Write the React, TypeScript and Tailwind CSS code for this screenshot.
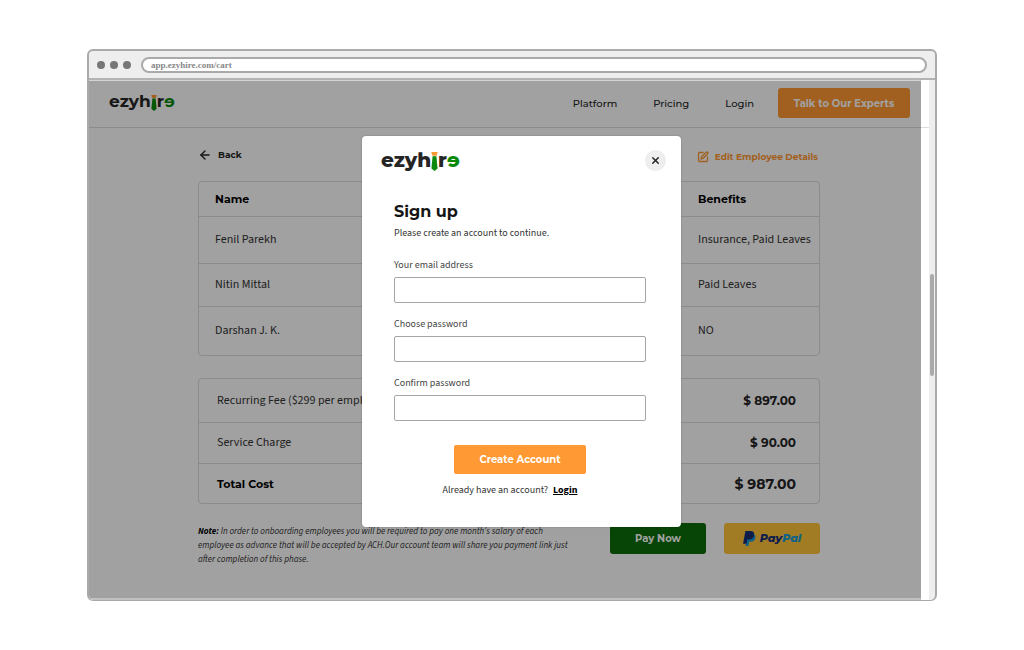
import React from "react";
import { ArrowLeft, SquarePen, X } from "lucide-react";

const heading = "font-[Montserrat,Inter,sans-serif]";
const body = "font-['Source_Sans_Pro','Source_Sans_3','Noto_Sans_CJK_SC',sans-serif]";

function Logo({ size }: { size: "sm" | "lg" }) {
  const text = size === "lg" ? "text-[20px] font-extrabold" : "text-[17px] font-bold";
  const tie = size === "lg" ? "h-[19px] w-[7px] mt-[3px]" : "h-[16px] w-[6px] mt-[3px]";
  return (
    <span className={`${heading} ${text} flex items-center leading-6 text-[#252525]`}>
      ezyh
      <svg viewBox="0 0 7 19" className={tie} aria-hidden="true">
        <path d="M0.200 0h6.600L5.500 3.800H1.500z" fill="#ff9933" />
        <path d="M1.600 4.200h3.800l1.200 12.200L3.500 19 0.400 16.400z" fill="#0a8a0a" />
      </svg>
      r<span className="-scale-x-100 text-[#0a8a0a]">e</span>
    </span>
  );
}

function PayPalMark() {
  return (
    <svg viewBox="0 0 24 28" className="h-[15px] w-[13px]" aria-hidden="true">
      <path d="M9 5h9.5c4 1 5.400 4 4.500 8-1 5-4.500 7-9 7h-2.500L10 28H4.500z" fill="#179bd7" />
      <path d="M4.300 0H14c5 0 7.400 3 6.500 7.500C19.500 13 16 15.500 11 15.500H8L6.500 24H0z" fill="#152f7c" />
      <path d="M9 6.500l10.800 3.200C18.500 13.600 15.500 15.500 11 15.500H7.600z" fill="#222d65" />
    </svg>
  );
}

const employees = [
  { name: "Fenil Parekh", benefits: "Insurance, Paid Leaves", height: "h-[47px]" },
  { name: "Nitin Mittal", benefits: "Paid Leaves", height: "h-[43px]" },
  { name: "Darshan J. K.", benefits: "NO", height: "h-[49px]" },
];

const fields = [
  { id: "email", label: "Your email address", type: "email" },
  { id: "password", label: "Choose password", type: "password" },
  { id: "confirm", label: "Confirm password", type: "password" },
];

const tableBox =
  "w-full border-separate border-spacing-0 rounded-[4px] border border-[#dcdcdc] text-left";
const line = "border-t border-[#dcdcdc]";

function SiteHeader() {
  return (
    <header className="flex h-[47px] items-center justify-between border-b border-[#dcdcdc] pr-[11px] pb-[2px] pl-5">
      <a href="#home" aria-label="ezyhire" className="-mt-1">
        <Logo size="sm" />
      </a>
      <nav className={`${heading} flex items-center text-[10px] font-medium text-[#252525]`}>
        <a href="#platform">Platform</a>
        <a href="#pricing" className="ml-9">Pricing</a>
        <a href="#login" className="ml-9">Login</a>
        <button
          type="button"
          className="ml-6 h-[30px] w-[132px] rounded-[3px] bg-[#ff9933] font-bold whitespace-nowrap text-white"
        >
          Talk to Our Experts
        </button>
      </nav>
    </header>
  );
}

function Cart() {
  return (
    <main className="pr-[101px] pl-[109px]">
      <div className={`${heading} flex h-[53px] items-center justify-between text-[9px] font-bold`}>
        <a href="#back" className="flex items-center gap-[6px] text-[#252525]">
          <ArrowLeft size={14} strokeWidth={2.4} />
          Back
        </a>
        <a href="#edit" className="flex items-center gap-[6px] pt-1 pr-[2px] text-[#ff9933]">
          <SquarePen size={12} strokeWidth={2.6} />
          Edit Employee Details
        </a>
      </div>

      <table className={tableBox}>
        <thead>
          <tr className={`${heading} h-[34px] text-[11px] leading-4 font-bold text-black`}>
            <th className="py-0 pr-0 pl-4">Name</th>
            <th className="w-[138px] py-0 pr-0 pl-[17px]">Benefits</th>
          </tr>
        </thead>
        <tbody className={`${body} text-[12px] leading-4 text-[#333]`}>
          {employees.map((e) => (
            <tr key={e.name} className={e.height}>
              <td className={`${line} py-0 pr-0 pl-4`}>{e.name}</td>
              <td className={`${line} py-0 pr-0 pl-[17px] whitespace-nowrap`}>{e.benefits}</td>
            </tr>
          ))}
        </tbody>
      </table>

      <table className={`${tableBox} mt-[22px]`}>
        <tbody className="leading-4">
          <tr className="h-[43px]">
            <td className={`${body} py-0 pl-[18px] text-[12px] text-[#333]`}>
              Recurring Fee ($299 per employee)
            </td>
            <td className={`${heading} py-0 pr-[23px] text-right text-[12px] font-bold text-[#252525]`}>$ 897.00</td>
          </tr>
          <tr className="h-[41px]">
            <td className={`${body} ${line} py-0 pl-[18px] text-[12px] text-[#333]`}>Service Charge</td>
            <td className={`${heading} ${line} py-0 pr-[23px] text-right text-[12px] font-bold text-[#252525]`}>$ 90.00</td>
          </tr>
          <tr className="h-[40px]">
            <td className={`${heading} ${line} py-0 pl-[18px] text-[11px] font-bold text-black`}>Total Cost</td>
            <td className={`${heading} ${line} py-0 pr-[23px] text-right text-[14px] font-bold text-[#252525]`}>$ 987.00</td>
          </tr>
        </tbody>
      </table>

      <div className="mt-[19px] flex items-start justify-between">
        <p className={`${body} w-[380px] pt-[2px] text-[9px] leading-[14px] text-[#333] italic`}>
          <strong className="text-black">Note:</strong> In order to onboarding employees you will be required to pay
          one month's salary of each employee as advance that will be accepted by ACH.Our account team will share you
          payment link just after completion of this phase.
        </p>
        <div className="flex gap-[18px]">
          <button
            type="button"
            className={`${heading} h-[31px] w-[96px] rounded-[3px] bg-[#0a6e0a] text-[10px] font-bold text-white`}
          >
            Pay Now
          </button>
          <button
            type="button"
            aria-label="PayPal"
            className="flex h-[31px] w-[96px] items-center justify-center gap-1 rounded-[3px] bg-[#ffc439] font-[Montserrat,Inter,sans-serif] text-[11px] font-extrabold italic"
          >
            <PayPalMark />
            <span className="text-[#152f7c]">
              Pay<span className="text-[#179bd7]">Pal</span>
            </span>
          </button>
        </div>
      </div>
    </main>
  );
}

function SignUpDialog() {
  return (
    <section
      role="dialog"
      aria-labelledby="signup-title"
      className="h-[391px] w-[319px] rounded-[4px] bg-white shadow-[0_0_2px_rgba(0,0,0,0.25)]"
    >
      <div className="flex items-center justify-between pt-[12px] pr-[15px] pl-[19px]">
        <Logo size="lg" />
        <button
          type="button"
          aria-label="Close"
          className="flex size-[21px] items-center justify-center rounded-full bg-[#eee] text-[#252525]"
        >
          <X size={11} strokeWidth={3.2} />
        </button>
      </div>
      <form className="px-8 pt-[28px]" onSubmit={(e) => e.preventDefault()}>
        <h1 id="signup-title" className={`${heading} text-[16px] leading-6 font-bold text-[#151515]`}>
          Sign up
        </h1>
        <p className={`${body} mt-[1px] text-[10px] leading-4 text-[#333]`}>Please create an account to continue.</p>
        <div className="mt-4 flex flex-col gap-[13px]">
          {fields.map((f) => (
            <div key={f.id} className="mr-[3px] flex flex-col gap-1">
              <label htmlFor={f.id} className={`${body} text-[10px] leading-4 text-[#444]`}>
                {f.label}
              </label>
              <input
                id={f.id}
                type={f.type}
                className="h-[26px] w-full rounded-[2px] border border-[#a6a6a6] bg-white px-2 text-[11px]"
              />
            </div>
          ))}
        </div>
        <div className="mr-[3px] mt-6 flex flex-col items-center">
          <button
            type="submit"
            className={`${heading} h-[29px] w-[132px] rounded-[2px] bg-[#ff9933] text-[10px] font-bold text-white`}
          >
            Create Account
          </button>
          <p className={`${body} mt-2 mr-5 text-[10px] leading-4 text-[#333]`}>
            Already have an account?
            <a href="#login" className="ml-[5px] font-bold text-black underline">
              Login
            </a>
          </p>
        </div>
      </form>
    </section>
  );
}

export default function App() {
  return (
    <div className="min-h-screen bg-white px-[87px] py-[49px]">
      <div className="overflow-hidden rounded-[6px] border-2 border-b-1 border-[#aaa] bg-[#eee]">
        <div className="flex h-[29px] items-center border-b-2 border-[#b4b4b4] px-2">
          <span className="flex gap-[5px]">
            <i className="size-2 rounded-full bg-[#777]" />
            <i className="size-2 rounded-full bg-[#777]" />
            <i className="size-2 rounded-full bg-[#777]" />
          </span>
          <input
            aria-label="Address"
            readOnly
            value="app.ezyhire.com/cart"
            className="ml-[10px] h-4 min-w-0 flex-1 rounded-full border-2 border-[#aaa] bg-white px-2 font-['Liberation_Serif',serif] text-[9px] font-bold text-[#888]"
          />
        </div>
        <div className="flex">
          <div className="relative h-[520px] min-w-0 flex-1 border-t border-b-2 border-t-[#d4d4d4] border-b-[#c0c0c0] bg-white">
            <SiteHeader />
            <Cart />
            <div className="absolute inset-0 flex items-start justify-center bg-black/37 pt-[55px] pl-[33px]">
              <SignUpDialog />
            </div>
          </div>
          <div className="w-2 bg-white">
            <div className="h-[48px] border-b border-[#dcdcdc]" />
          </div>
          <div className="w-[6px] px-px pt-[194px]">
            <div className="h-[102px] rounded-full bg-[#aaa]" />
          </div>
        </div>
      </div>
    </div>
  );
}
